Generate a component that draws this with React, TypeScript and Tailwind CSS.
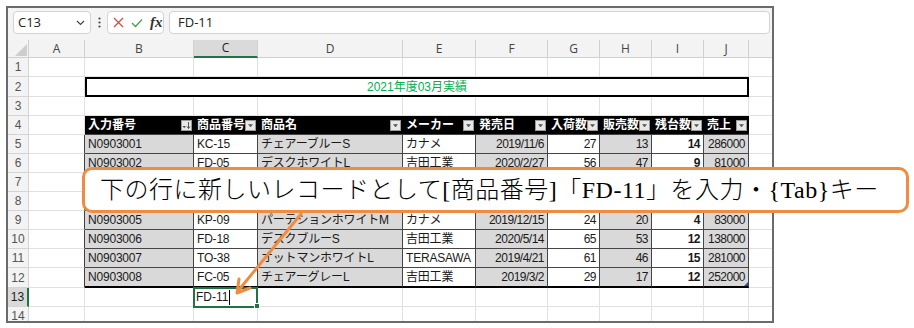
import React from 'react';

const colW = ['w-[21px]', 'w-[56px]', 'w-[109px]', 'w-[64px]', 'w-[145px]', 'w-[73px]', 'w-[72px]', 'w-[52px]', 'w-[52px]', 'w-[52px]', 'w-[45px]'];
const rowH: Record<number, string> = {
  1: 'h-[20px]', 2: 'h-[20px]', 3: 'h-[20px]', 4: 'h-[20px]', 5: 'h-[19px]', 6: 'h-[19px]', 7: 'h-[19px]',
  8: 'h-[19px]', 9: 'h-[20px]', 10: 'h-[19px]', 11: 'h-[19px]', 12: 'h-[20px]', 13: 'h-[20px]', 14: 'h-[20px]',
};
const letters = ['A', 'B', 'C', 'D', 'E', 'F', 'G', 'H', 'I', 'J'];
const headers = ['入力番号', '商品番号', '商品名', 'メーカー', '発売日', '入荷数', '販売数', '残台数', '売上'];

// rows 7 and 8 sit under the callout, so they stay blank here
const data = [
  ['N0903001', 'KC-15', 'チェアーブルーS', 'カナメ', '2019/11/6', '27', '13', '14', '286000'],
  ['N0903002', 'FD-05', 'デスクホワイトL', '吉田工業', '2020/2/27', '56', '47', '9', '81000'],
  ['', '', '', '', '', '', '', '', ''],
  ['', '', '', '', '', '', '', '', ''],
  ['N0903005', 'KP-09', 'パーテションホワイトM', 'カナメ', '2019/12/15', '24', '20', '4', '83000'],
  ['N0903006', 'FD-18', 'デスクブルーS', '吉田工業', '2020/5/14', '65', '53', '12', '138000'],
  ['N0903007', 'TO-38', 'オットマンホワイトL', 'TERASAWA', '2019/4/21', '61', '46', '15', '281000'],
  ['N0903008', 'FC-05', 'チェアーグレーL', '吉田工業', '2019/3/2', '29', '17', '12', '252000'],
];

const grid = 'border-r border-b border-[#e1e1e1]';

function RowHead({ r }: { r: number }) {
  const sel = r === 13;
  return (
    <div
      className={`${colW[0]} shrink-0 h-full flex items-center justify-center border-b border-[#d4d4d4] text-[12px] ${
        sel ? 'bg-[#d9d9d9] text-[#1d1d1d] border-r-2 border-r-[#217346]' : 'bg-[#f3f3f3] text-[#555] border-r'
      }`}
    >
      {r}
    </div>
  );
}

function Plain({ c, cls = '' }: { c: number; cls?: string }) {
  return <div className={`${colW[c]} shrink-0 h-full ${grid} ${cls}`} />;
}

function Rest() {
  return <div className="flex-1 h-full border-b border-[#e1e1e1]" />;
}

function FilterBtn({ sort }: { sort?: boolean }) {
  return (
    <div className="w-[11px] h-[11px] shrink-0 bg-[#e8e8e8] border border-[#9a9a9a] flex items-center justify-center">
      <svg width="9" height="9" viewBox="0 0 9 9">
        {sort ? (
          <>
            <path d="M0.5 5h3.5l-1.75 2.2z" fill="#555" />
            <path d="M6.5 1v6.5M5 5.5l1.5 2 1.5-2" stroke="#555" fill="none" strokeWidth="1" />
          </>
        ) : (
          <path d="M2 3.2h5l-2.5 3z" fill="#555" />
        )}
      </svg>
    </div>
  );
}

function DataRow({ r, vals }: { r: number; vals: string[] }) {
  return (
    <div className={`flex ${rowH[r]}`}>
      <RowHead r={r} />
      <div className={`${colW[1]} shrink-0 h-full border-r border-b border-[#e1e1e1] border-r-[#3f3f3f]`} />
      {vals.map((v, i) => {
        const c = i + 2;
        const gray = c % 2 === 0 ? 'bg-[#d9d9d9]' : 'bg-white';
        const right = c >= 6 ? 'justify-end tracking-[-0.5px]' : 'justify-start tracking-[-0.2px]';
        const bold = c === 9 ? 'font-bold' : '';
        const bottom = r === 12 ? 'border-b-2 border-b-black' : '';
        return (
          <div
            key={c}
            className={`${colW[c]} shrink-0 h-full flex items-center px-[3px] border-r border-b border-[#454545] ${bottom} ${gray} ${right} ${bold} text-[12px] text-[#1a1a1a] whitespace-nowrap overflow-hidden relative`}
          >
            {v}
            {r === 12 && c === 10 && (
              <svg className="absolute right-0 bottom-0" width="4" height="4" viewBox="0 0 4 4">
                <path d="M4 0v4H0z" fill="#2b4fa8" />
              </svg>
            )}
          </div>
        );
      })}
      <Rest />
    </div>
  );
}

export default function App() {
  return (
    <div className="w-[914px] h-[328px] bg-white relative pt-[6px] pl-[6px] font-['Liberation_Sans','Noto_Sans_CJK_JP',sans-serif]">
      <div className="w-[768px] h-[317px] border-2 border-[#6b6b6b] overflow-hidden flex flex-col">
        {/* formula bar */}
        <div className="h-[32px] shrink-0 flex items-start pt-[3px] pl-[5px] pr-[2px] bg-[#f4f4f4] font-['Open_Sans',sans-serif]">
          <div className="w-[78px] h-[23px] rounded-[4px] border border-[#d3d3d3] bg-white flex items-center justify-between pl-[4px] pr-[5px] text-[13px] text-[#222]">
            <span>C13</span>
            <svg width="9" height="6" viewBox="0 0 9 6">
              <path d="M1 1l3.5 3.5L8 1" stroke="#444" strokeWidth="1.2" fill="none" />
            </svg>
          </div>
          <div className="w-[16px] h-[23px] flex items-center justify-center">
            <svg width="3" height="11" viewBox="0 0 3 11">
              <circle cx="1.5" cy="1.5" r="1.1" fill="#444" />
              <circle cx="1.5" cy="5.5" r="1.1" fill="#444" />
              <circle cx="1.5" cy="9.5" r="1.1" fill="#444" />
            </svg>
          </div>
          <div className="w-[57px] h-[23px] rounded-[4px] border border-[#d3d3d3] bg-white flex items-center pl-[5px] gap-[7px]">
            <svg width="11" height="11" viewBox="0 0 11 11">
              <path d="M1 1l9 9M10 1l-9 9" stroke="#e0453f" strokeWidth="1.3" />
            </svg>
            <svg width="12" height="10" viewBox="0 0 12 10">
              <path d="M1 5l3.5 3.5L11 1.5" stroke="#3fa34d" strokeWidth="1.3" fill="none" />
            </svg>
            <span className="italic font-semibold font-['Liberation_Serif',serif] text-[15px] text-[#333] leading-none">fx</span>
          </div>
          <div className="flex-1 ml-[5px] h-[23px] rounded-[4px] border border-[#d3d3d3] bg-white flex items-center pl-[8px] text-[13px] text-[#222]">
            FD-11
          </div>
        </div>

        {/* column headers */}
        <div className="h-[18px] shrink-0 flex font-['Open_Sans',sans-serif]">
          <div className={`${colW[0]} shrink-0 h-full bg-[#f3f3f3] border-r border-b border-[#d0d0d0] flex items-end justify-end p-[1px]`}>
            <svg width="12" height="12" viewBox="0 0 12 12">
              <path d="M12 0v12H0z" fill="#cdcdcd" />
            </svg>
          </div>
          {letters.map((l, i) => (
            <div
              key={l}
              className={`${colW[i + 1]} shrink-0 h-full flex items-center justify-center text-[12px] border-r border-b border-[#d0d0d0] ${
                l === 'C' ? 'bg-[#dadada] text-[#1d1d1d] border-b-2 border-b-[#217346]' : 'bg-[#f3f3f3] text-[#444]'
              }`}
            >
              {l}
            </div>
          ))}
          <div className="flex-1 h-full bg-[#f3f3f3] border-b border-[#d0d0d0]" />
        </div>

        {/* row 1 */}
        <div className={`flex ${rowH[1]}`}>
          <RowHead r={1} />
          {letters.map((l, i) => (
            <Plain key={l} c={i + 1} />
          ))}
          <Rest />
        </div>

        {/* row 2 title */}
        <div className={`flex ${rowH[2]}`}>
          <RowHead r={2} />
          <Plain c={1} />
          <div className="w-[664px] shrink-0 h-full border-2 border-black flex items-center justify-center text-[12px] text-[#00b050]">
            2021年度03月実績
          </div>
          <Rest />
        </div>

        {/* row 3 */}
        <div className={`flex ${rowH[3]}`}>
          <RowHead r={3} />
          {letters.map((l, i) => (
            <Plain key={l} c={i + 1} />
          ))}
          <Rest />
        </div>

        {/* row 4 table header */}
        <div className={`flex ${rowH[4]}`}>
          <RowHead r={4} />
          <Plain c={1} />
          {headers.map((h, i) => (
            <div
              key={h}
              className={`${colW[i + 2]} shrink-0 h-full bg-black text-white font-bold text-[12px] flex items-center justify-between pl-[3px] pr-[2px] border-b border-[#454545] whitespace-nowrap`}
            >
              <span>{h}</span>
              <FilterBtn sort={i === 0} />
            </div>
          ))}
          <Rest />
        </div>

        {data.map((vals, i) => (
          <DataRow key={i} r={i + 5} vals={vals} />
        ))}

        {/* row 13 editing */}
        <div className={`flex ${rowH[13]}`}>
          <RowHead r={13} />
          <Plain c={1} />
          <Plain c={2} />
          <div className={`${colW[3]} shrink-0 h-full ${grid} relative flex items-center pl-[2px] text-[12px] text-[#1a1a1a]`}>
            <span>FD-11</span>
            <span className="ml-[1px] w-px h-[15px] bg-black" />
            <div className="absolute -left-[1px] -top-[1px] w-[65px] h-[21px] border-2 border-[#217346]" />
            <div className="absolute -right-[3px] -bottom-[3px] w-[6px] h-[6px] bg-[#217346] border border-white" />
          </div>
          {[4, 5, 6, 7, 8, 9, 10].map((c) => (
            <Plain key={c} c={c} />
          ))}
          <Rest />
        </div>

        {/* row 14 */}
        <div className={`flex ${rowH[14]}`}>
          <RowHead r={14} />
          {letters.map((l, i) => (
            <Plain key={l} c={i + 1} />
          ))}
          <Rest />
        </div>
      </div>

      {/* callout */}
      <div className="absolute left-[82px] top-[167px] w-[827px] h-[46px] rounded-[10px] border-[3px] border-[#f08c3f] bg-white flex items-center pl-[15px] text-[24px] tracking-[0.5px] font-light text-black whitespace-nowrap font-['Liberation_Serif','Noto_Sans_CJK_JP',serif]">
        下の行に新しいレコードとして[商品番号]「FD-11」を入力・{'{Tab}'}キー
      </div>

      {/* arrow */}
      <svg className="absolute left-0 top-0 pointer-events-none" width="914" height="328" viewBox="0 0 914 328">
        <g stroke="#f08c3f" strokeWidth="3" fill="none" strokeLinecap="round" strokeLinejoin="round">
          <line x1="301" y1="214" x2="238" y2="291" />
          <polyline points="239,279 237,293 250,288" />
        </g>
      </svg>
    </div>
  );
}
